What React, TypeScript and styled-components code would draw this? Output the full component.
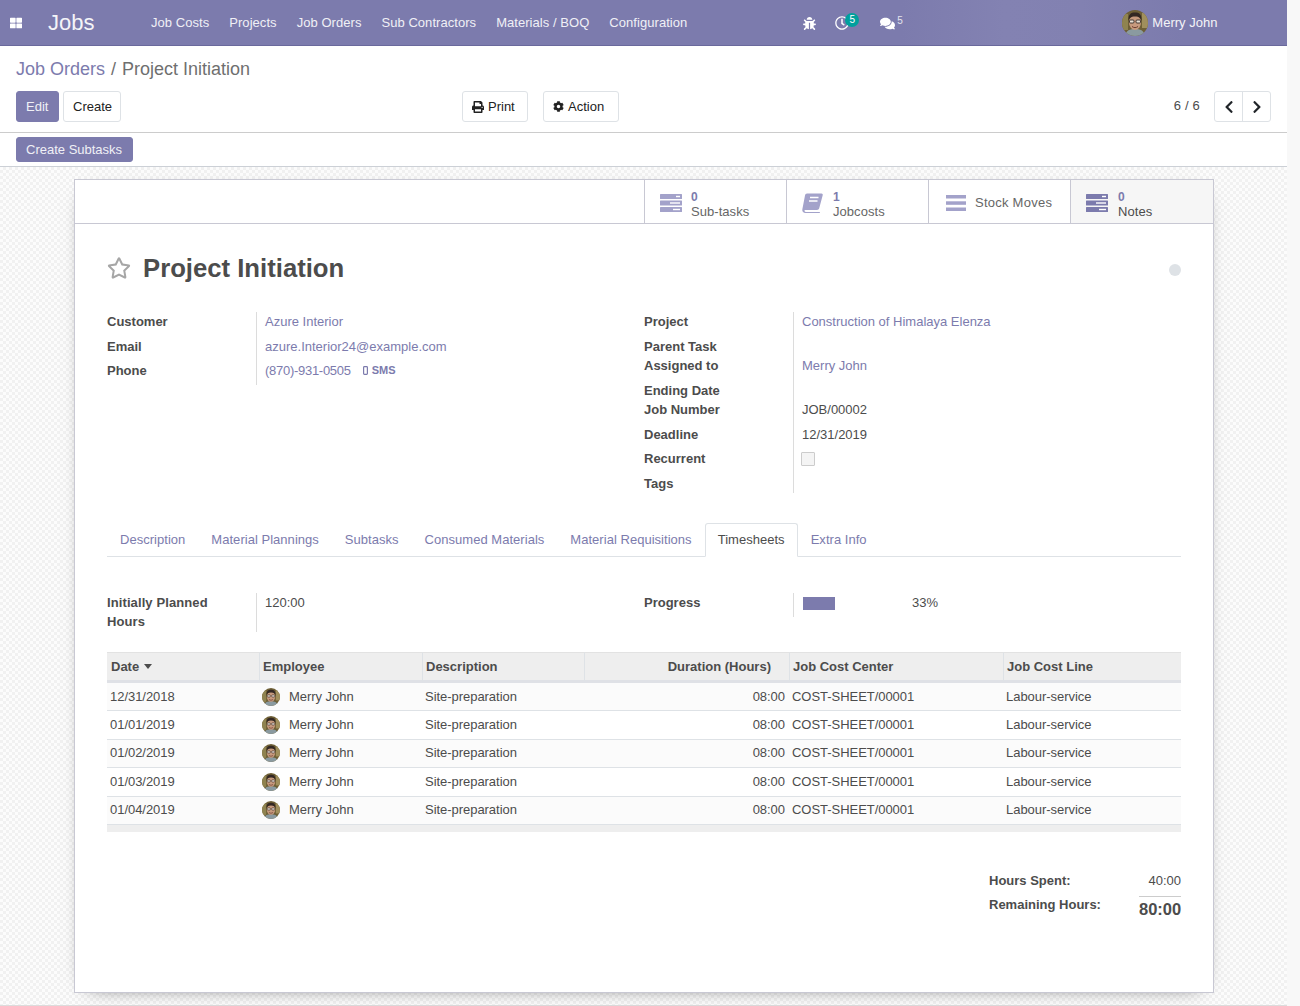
import React from "react";
import styled, { createGlobalStyle } from "styled-components";
import {
  FaBug,
  FaChevronLeft,
  FaChevronRight,
  FaCog,
  FaComments,
  FaPrint,
  FaRegClock,
  FaRegStar,
  FaThLarge,
} from "react-icons/fa";

const PURPLE = "#7c7bad";
const TEXT = "#4c4c4c";

const GlobalStyle = createGlobalStyle`
  html, body {
    margin: 0;
    height: 1006px;
    overflow: hidden;
    background: #f8f8f8;
  }
  body {
    font-family: "Liberation Sans", Arial, sans-serif;
    font-size: 13px;
    line-height: 18px;
    color: ${TEXT};
  }
  * { box-sizing: border-box; }
`;

const Page = styled.div`
  width: 1287px;
  height: 1006px;
  display: flex;
  flex-direction: column;
  background: #fff;
`;

/* top bar */
const Navbar = styled.header`
  height: 46px;
  flex: none;
  padding-top: 1px;
  display: flex;
  align-items: center;
  color: #fff;
  border-bottom: 1px solid #6a699c;
  background: linear-gradient(90deg, ${PURPLE} 70%, #8382b2 78%, #8281b1 84%, ${PURPLE} 92%);
`;

const AppsButton = styled.span`
  display: flex;
  width: 48px;
  padding-left: 10px;
  font-size: 12px;
`;

const Brand = styled.span`
  width: 103px;
  font-size: 22px;
  line-height: 30px;
  color: #f4f4f8;
`;

const NavMenu = styled.nav`
  display: flex;
  gap: 20px;
  letter-spacing: 0.05px;
  color: #f0f0f6;
`;

const NavTools = styled.div`
  margin-left: 116px;
  display: flex;
  align-items: center;
`;

const NavIcon = styled.span<{ $w: number }>`
  position: relative;
  display: flex;
  align-items: center;
  width: ${(p) => p.$w}px;
`;

const NavBadge = styled.span`
  position: absolute;
  left: 10px;
  top: -3px;
  width: 14px;
  height: 14px;
  border-radius: 50%;
  background: #00a09d;
  color: #fff;
  font-size: 10px;
  line-height: 13px;
  text-align: center;
`;

const SuperCount = styled.span`
  position: absolute;
  left: 17px;
  top: -1px;
  font-size: 10px;
  line-height: 12px;
  color: #e4e4ee;
`;

const NavUser = styled.div`
  margin-left: 218px;
  display: flex;
  align-items: center;
  gap: 4px;
  color: #f4f4f8;
`;

const AvatarFrame = styled.span<{ $size: number }>`
  display: block;
  flex: none;
  width: ${(p) => p.$size}px;
  height: ${(p) => p.$size}px;
  border-radius: 50%;
  overflow: hidden;
  svg {
    display: block;
    width: 100%;
    height: 100%;
  }
`;

const Avatar = ({ size }: { size: number }) => (
  <AvatarFrame $size={size}>
    <svg viewBox="0 0 26 26">
      <rect width="26" height="26" fill="#6e5f36" />
      <rect x="0" y="4" width="6" height="16" fill="#8f8350" />
      <rect x="20" y="3" width="6" height="15" fill="#a08f5c" />
      <path d="M3 26c1-6 5-7 10-7s9 1 10 7z" fill="#8a9aa0" />
      <ellipse cx="13" cy="12.500" rx="6" ry="7.500" fill="#c79a7e" />
      <path d="M6.500 11C6 4 9 2.500 13 2.500S20 4 19.500 11c-1-3-2-4.500-6.500-4.500S7.500 8 6.500 11z" fill="#332823" />
      <rect x="7.500" y="10" width="4.500" height="3" rx="1" fill="#eadfd4" stroke="#221c1a" strokeWidth=".8" />
      <rect x="14" y="10" width="4.500" height="3" rx="1" fill="#eadfd4" stroke="#221c1a" strokeWidth=".8" />
      <path d="M10 16.500c2 1.500 4 1.500 6 0" stroke="#6d3c30" strokeWidth="1" fill="none" />
    </svg>
  </AvatarFrame>
);

/* control panel */
const ControlPanel = styled.section`
  flex: none;
  height: 87px;
  padding: 10px 16px 0;
  border-bottom: 1px solid #ccc;
`;

const Breadcrumb = styled.div`
  display: flex;
  gap: 6px;
  font-size: 18px;
  line-height: 26px;
  color: #6f6f6f;
  margin-bottom: 9px;
`;

const CrumbLink = styled.span`
  color: ${PURPLE};
`;

const PanelRow = styled.div`
  display: flex;
  align-items: center;
`;

const Button = styled.button<{ $primary?: boolean; $ml?: number; $w: number }>`
  width: ${(p) => p.$w}px;
  height: 31px;
  margin-left: ${(p) => p.$ml ?? 0}px;
  padding: 0 0 0 9px;
  display: inline-flex;
  align-items: center;
  gap: 4px;
  font: inherit;
  border-radius: 3px;
  color: ${(p) => (p.$primary ? "#f0f0f6" : "#222")};
  background: ${(p) => (p.$primary ? PURPLE : "#fff")};
  border: 1px solid ${(p) => (p.$primary ? PURPLE : "#dee2e6")};
`;

const PagerCount = styled.span`
  margin-left: auto;
  margin-right: 14px;
  margin-bottom: 2px;
  letter-spacing: 0.2px;
`;

const Pager = styled.div`
  display: flex;
  width: 57px;
  height: 31px;
  border: 1px solid #dee2e6;
  border-radius: 3px;
`;

const PagerButton = styled.span`
  flex: 1;
  display: flex;
  align-items: center;
  justify-content: center;
  color: #212529;
  font-size: 14px;
  & + & {
    border-left: 1px solid #dee2e6;
  }
`;

const StatusBar = styled.section`
  flex: none;
  height: 34px;
  padding: 4px 16px 0;
  border-bottom: 1px solid #ccd0d6;
`;

const StatusButton = styled.button`
  width: 117px;
  height: 25px;
  padding: 0 0 0 9px;
  text-align: left;
  font: inherit;
  color: #f0f0f6;
  background: ${PURPLE};
  border: 1px solid ${PURPLE};
  border-radius: 3px;
`;

/* form sheet */
const SheetArea = styled.main`
  flex: 1;
  padding: 12px 73px 0 74px;
  border-bottom: 1px solid #dcdcdc;
  background-color: #f8f8f8;
  background-image: repeating-conic-gradient(#f1f1f1 0 25%, #fcfcfc 0 50%);
  background-size: 6px 6px;
`;

const Sheet = styled.article`
  height: 814px;
  background: #fff;
  border: 1px solid #c8c8d3;
  box-shadow: 0 5px 20px -15px #000;
`;

const ButtonBox = styled.div`
  height: 44px;
  display: flex;
  justify-content: flex-end;
  border-bottom: 1px solid #c8c8d3;
`;

const StatButton = styled.div<{ $active?: boolean }>`
  width: 142px;
  padding-left: 15px;
  display: flex;
  align-items: center;
  gap: ${(p) => (p.$active ? 10 : 9)}px;
  border-left: 1px solid #c8c8d3;
  color: ${(p) => (p.$active ? TEXT : "#666")};
  background: ${(p) => (p.$active ? "#f6f6f6" : "#fff")};
  &:last-child {
    width: 143px;
  }
  svg {
    flex: none;
    display: block;
    margin-top: 2px;
  }
`;

const StatText = styled.div`
  line-height: 14px;
  padding-top: 5px;
  letter-spacing: 0.05px;
`;

const StatValue = styled.div`
  height: 15px;
  color: ${PURPLE};
  font-weight: 700;
  font-size: 12px;
`;

const StatLabel = styled.span`
  padding-top: 3px;
  letter-spacing: 0.25px;
`;

const SheetBody = styled.div`
  padding: 24px 32px 0;
`;

const TitleRow = styled.div`
  display: flex;
  align-items: center;
  gap: 12px;
  height: 40px;
  margin-bottom: 24px;
  color: #a6a6a6;
`;

const Title = styled.h1`
  margin: 0;
  font-size: 25.7px;
  line-height: 40px;
  font-weight: 700;
  color: ${TEXT};
`;

const StatusDot = styled.span`
  margin: 4px 0 0 auto;
  width: 12px;
  height: 12px;
  border-radius: 50%;
  background: #dee2e6;
`;

const Groups = styled.div`
  display: grid;
  grid-template-columns: 537px 537px;
`;

const Field = styled.div<{ $h?: number }>`
  display: flex;
  height: ${(p) => p.$h ?? 25}px;
`;

const FieldLabel = styled.div`
  width: 149px;
  flex: none;
  padding-top: 1px;
  font-weight: 700;
`;

const FieldValue = styled.div`
  flex: 1;
  display: flex;
  padding: 1px 0 0 8px;
  border-left: 1px solid #dcdcdc;
`;

const Link = styled.span`
  color: ${PURPLE};
`;

const PhoneLink = styled(Link)`
  letter-spacing: -0.28px;
`;

const SmsLink = styled.span`
  align-self: flex-start;
  height: 18px;
  margin: -1px 0 0 12px;
  display: flex;
  align-items: center;
  gap: 4px;
  font-size: 11px;
  font-weight: 700;
  color: ${PURPLE};
`;

const Checkbox = styled.span`
  width: 14px;
  height: 14px;
  margin: 2px 0 0 -1px;
  background: #f4f4f4;
  border: 1px solid #ccc;
  border-radius: 1px;
`;

const Tabs = styled.div`
  display: flex;
  height: 34px;
  margin: 30px 0 36px;
  border-bottom: 1px solid #dee2e6;
`;

const Tab = styled.div<{ $active?: boolean }>`
  height: 34px;
  padding: 7px 12px 0;
  letter-spacing: 0.03px;
  color: ${(p) => (p.$active ? TEXT : PURPLE)};
  background: ${(p) => (p.$active ? "#fff" : "transparent")};
  border: 1px solid ${(p) => (p.$active ? "#dee2e6" : "transparent")};
  border-bottom-color: ${(p) => (p.$active ? "#fff" : "transparent")};
  border-radius: 3px 3px 0 0;
`;

const TimeGroup = styled(Groups)`
  margin-bottom: 20px;
  height: 39px;
`;

const TallLabel = styled(FieldLabel)`
  padding-top: 0;
  line-height: 19px;
  letter-spacing: 0.1px;
`;

const PlannedField = styled.div`
  display: flex;
  height: 39px;
`;

const ProgressField = styled.div`
  display: flex;
  height: 24px;
`;

const ProgressTrack = styled.div`
  width: 97px;
  height: 13px;
  margin: 3px 0 0 1px;
`;

const ProgressFill = styled.div`
  height: 100%;
  background: ${PURPLE};
`;

const ProgressText = styled.span`
  margin-left: 12px;
`;

const Table = styled.table`
  width: 1074px;
  table-layout: fixed;
  border-collapse: separate;
  border-spacing: 0;
`;

const HeadCell = styled.th<{ $right?: boolean }>`
  height: 31px;
  padding: 0 ${(p) => (p.$right ? 18 : 4)}px 0 4px;
  background: #eee;
  font-weight: 700;
  text-align: ${(p) => (p.$right ? "right" : "left")};
  border-top: 1px solid #e2e2e2;
  border-bottom: 3px solid #dfe1e6;
  & + & {
    padding-left: 3px;
    border-left: 1px solid #dee2e6;
  }
`;

const SortCaret = styled.span`
  display: inline-block;
  margin-left: 5px;
  vertical-align: 2px;
  border-left: 4.500px solid transparent;
  border-right: 4.500px solid transparent;
  border-top: 5px solid ${TEXT};
`;

const Row = styled.tr<{ $odd: boolean }>`
  background: ${(p) => (p.$odd ? "#fbfbfb" : "#fff")};
`;

const Cell = styled.td<{ $right?: boolean }>`
  height: 28.4px;
  padding: 0 ${(p) => (p.$right ? 4 : 3)}px 0 3px;
  letter-spacing: -0.04px;
  text-align: ${(p) => (p.$right ? "right" : "left")};
  border-bottom: 1px solid #dee2e6;
`;

const Employee = styled.span`
  display: flex;
  align-items: center;
  gap: 9px;
`;

const TableFoot = styled.div`
  width: 1074px;
  height: 7px;
  background: #eee;
`;

const Totals = styled.div`
  margin: 40px 0 0 auto;
  width: 192px;
`;

const TotalRow = styled.div`
  display: flex;
  justify-content: space-between;
`;

const TotalLabel = styled.span`
  font-weight: 700;
`;

const SpentRow = styled(TotalRow)`
  height: 24px;
`;

const GrandTotal = styled.span`
  width: 42px;
  padding-top: 3px;
  border-top: 1px solid #ccc;
  font-size: 16.5px;
  line-height: 18px;
  font-weight: 700;
  white-space: nowrap;
`;

/* small drawings for the stat buttons */
const TasksIcon = ({ color }: { color: string }) => (
  <svg width="22" height="18" viewBox="0 0 22 18">
    <g fill={color}>
      <rect y="0" width="22" height="5" rx="0.5" />
      <rect y="6.500" width="22" height="5" rx="0.5" />
      <rect y="13" width="22" height="5" rx="0.5" />
    </g>
    <g fill="#fff">
      <rect x="16" y="1.800" width="4" height="1.400" />
      <rect x="10" y="8.300" width="10" height="1.400" />
      <rect x="13" y="14.800" width="7" height="1.400" />
    </g>
  </svg>
);

const BookIcon = () => (
  <svg width="22" height="20" viewBox="0 0 22 20">
    <path
      d="M5 0.500h14.500c1 0 1.500.8 1.200 1.800l-3.500 13c-.3 1-1.200 1.700-2.200 1.700H3.500c-.8 0-1.200.6-1 1.100.2.500.7.900 1.500.900h13l1 .0-.3 1H3.500C1.500 20 0 18.500.300 16.500L3 2.500C3.200 1.200 4 .5 5 .5z"
      fill="#a3a2ca"
    />
    <path d="M8 4.500h8.500M7 8h8.500" stroke="#fff" strokeWidth="1.300" />
  </svg>
);

const BarsSvg = styled.svg`
  margin-left: 2px;
`;

const BarsIcon = () => (
  <BarsSvg width="20" height="16" viewBox="0 0 20 16">
    <g fill="#a3a2ca">
      <rect width="20" height="3.500" />
      <rect y="6.300" width="20" height="3.500" />
      <rect y="12.500" width="20" height="3.500" />
    </g>
  </BarsSvg>
);

const MobileIcon = () => (
  <svg width="5" height="9" viewBox="0 0 5 9">
    <rect x="0.600" y="0.600" width="3.800" height="7.800" rx="0.8" fill="none" stroke={PURPLE} strokeWidth="1.200" />
  </svg>
);

const menuItems = ["Job Costs", "Projects", "Job Orders", "Sub Contractors", "Materials / BOQ", "Configuration"];
const tabs = ["Description", "Material Plannings", "Subtasks", "Consumed Materials", "Material Requisitions", "Timesheets", "Extra Info"];
const columns = [152, 163, 162, 205, 214, 178];
const dates = ["12/31/2018", "01/01/2019", "01/02/2019", "01/03/2019", "01/04/2019"];

const App = () => {
  return (
    <Page>
      <GlobalStyle />
      <Navbar>
        <AppsButton>
          <FaThLarge />
        </AppsButton>
        <Brand>Jobs</Brand>
        <NavMenu>
          {menuItems.map((item) => (
            <span key={item}>{item}</span>
          ))}
        </NavMenu>
        <NavTools>
          <NavIcon $w={32}>
            <FaBug size={13} />
          </NavIcon>
          <NavIcon $w={45}>
            <FaRegClock size={14} />
            <NavBadge>5</NavBadge>
          </NavIcon>
          <NavIcon $w={24}>
            <FaComments size={15} />
            <SuperCount>5</SuperCount>
          </NavIcon>
        </NavTools>
        <NavUser>
          <Avatar size={26} />
          <span>Merry John</span>
        </NavUser>
      </Navbar>

      <ControlPanel>
        <Breadcrumb>
          <CrumbLink>Job Orders</CrumbLink>
          <span>/</span>
          <span>Project Initiation</span>
        </Breadcrumb>
        <PanelRow>
          <Button $primary $w={43}>
            Edit
          </Button>
          <Button $ml={4} $w={58}>
            Create
          </Button>
          <Button $ml={341} $w={66}>
            <FaPrint size={12} />
            Print
          </Button>
          <Button $ml={15} $w={76}>
            <FaCog size={11} />
            Action
          </Button>
          <PagerCount>6 / 6</PagerCount>
          <Pager>
            <PagerButton>
              <FaChevronLeft />
            </PagerButton>
            <PagerButton>
              <FaChevronRight />
            </PagerButton>
          </Pager>
        </PanelRow>
      </ControlPanel>

      <StatusBar>
        <StatusButton>Create Subtasks</StatusButton>
      </StatusBar>

      <SheetArea>
        <Sheet>
          <ButtonBox>
            <StatButton>
              <TasksIcon color="#a3a2ca" />
              <StatText>
                <StatValue>0</StatValue>
                Sub-tasks
              </StatText>
            </StatButton>
            <StatButton>
              <BookIcon />
              <StatText>
                <StatValue>1</StatValue>
                Jobcosts
              </StatText>
            </StatButton>
            <StatButton>
              <BarsIcon />
              <StatLabel>Stock Moves</StatLabel>
            </StatButton>
            <StatButton $active>
              <TasksIcon color={PURPLE} />
              <StatText>
                <StatValue>0</StatValue>
                Notes
              </StatText>
            </StatButton>
          </ButtonBox>

          <SheetBody>
            <TitleRow>
              <FaRegStar size={24} />
              <Title>Project Initiation</Title>
              <StatusDot />
            </TitleRow>

            <Groups>
              <div>
                <Field>
                  <FieldLabel>Customer</FieldLabel>
                  <FieldValue>
                    <Link>Azure Interior</Link>
                  </FieldValue>
                </Field>
                <Field $h={24}>
                  <FieldLabel>Email</FieldLabel>
                  <FieldValue>
                    <Link>azure.Interior24@example.com</Link>
                  </FieldValue>
                </Field>
                <Field $h={24}>
                  <FieldLabel>Phone</FieldLabel>
                  <FieldValue>
                    <PhoneLink>(870)-931-0505</PhoneLink>
                    <SmsLink>
                      <MobileIcon />
                      SMS
                    </SmsLink>
                  </FieldValue>
                </Field>
              </div>
              <div>
                <Field>
                  <FieldLabel>Project</FieldLabel>
                  <FieldValue>
                    <Link>Construction of Himalaya Elenza</Link>
                  </FieldValue>
                </Field>
                <Field $h={19}>
                  <FieldLabel>Parent Task</FieldLabel>
                  <FieldValue />
                </Field>
                <Field>
                  <FieldLabel>Assigned to</FieldLabel>
                  <FieldValue>
                    <Link>Merry John</Link>
                  </FieldValue>
                </Field>
                <Field $h={19}>
                  <FieldLabel>Ending Date</FieldLabel>
                  <FieldValue />
                </Field>
                <Field>
                  <FieldLabel>Job Number</FieldLabel>
                  <FieldValue>JOB/00002</FieldValue>
                </Field>
                <Field $h={24}>
                  <FieldLabel>Deadline</FieldLabel>
                  <FieldValue>12/31/2019</FieldValue>
                </Field>
                <Field>
                  <FieldLabel>Recurrent</FieldLabel>
                  <FieldValue>
                    <Checkbox />
                  </FieldValue>
                </Field>
                <Field $h={19}>
                  <FieldLabel>Tags</FieldLabel>
                  <FieldValue />
                </Field>
              </div>
            </Groups>

            <Tabs>
              {tabs.map((tab) => (
                <Tab key={tab} $active={tab === "Timesheets"}>
                  {tab}
                </Tab>
              ))}
            </Tabs>

            <TimeGroup>
              <PlannedField>
                <TallLabel>
                  Initially Planned
                  <br />
                  Hours
                </TallLabel>
                <FieldValue>120:00</FieldValue>
              </PlannedField>
              <ProgressField>
                <FieldLabel>Progress</FieldLabel>
                <FieldValue>
                  <ProgressTrack>
                    <ProgressFill style={{ width: "33%" }} />
                  </ProgressTrack>
                  <ProgressText>33%</ProgressText>
                </FieldValue>
              </ProgressField>
            </TimeGroup>

            <Table>
              <colgroup>
                {columns.map((w, i) => (
                  <col key={i} width={w} />
                ))}
              </colgroup>
              <thead>
                <tr>
                  <HeadCell>
                    Date
                    <SortCaret />
                  </HeadCell>
                  <HeadCell>Employee</HeadCell>
                  <HeadCell>Description</HeadCell>
                  <HeadCell $right>Duration (Hours)</HeadCell>
                  <HeadCell>Job Cost Center</HeadCell>
                  <HeadCell>Job Cost Line</HeadCell>
                </tr>
              </thead>
              <tbody>
                {dates.map((date, i) => (
                  <Row key={date} $odd={i % 2 === 0}>
                    <Cell>{date}</Cell>
                    <Cell>
                      <Employee>
                        <Avatar size={18} />
                        Merry John
                      </Employee>
                    </Cell>
                    <Cell>Site-preparation</Cell>
                    <Cell $right>08:00</Cell>
                    <Cell>COST-SHEET/00001</Cell>
                    <Cell>Labour-service</Cell>
                  </Row>
                ))}
              </tbody>
            </Table>
            <TableFoot />

            <Totals>
              <SpentRow>
                <TotalLabel>Hours Spent:</TotalLabel>
                <span>40:00</span>
              </SpentRow>
              <TotalRow>
                <TotalLabel>Remaining Hours:</TotalLabel>
                <GrandTotal>80:00</GrandTotal>
              </TotalRow>
            </Totals>
          </SheetBody>
        </Sheet>
      </SheetArea>
    </Page>
  );
};

export default App;
